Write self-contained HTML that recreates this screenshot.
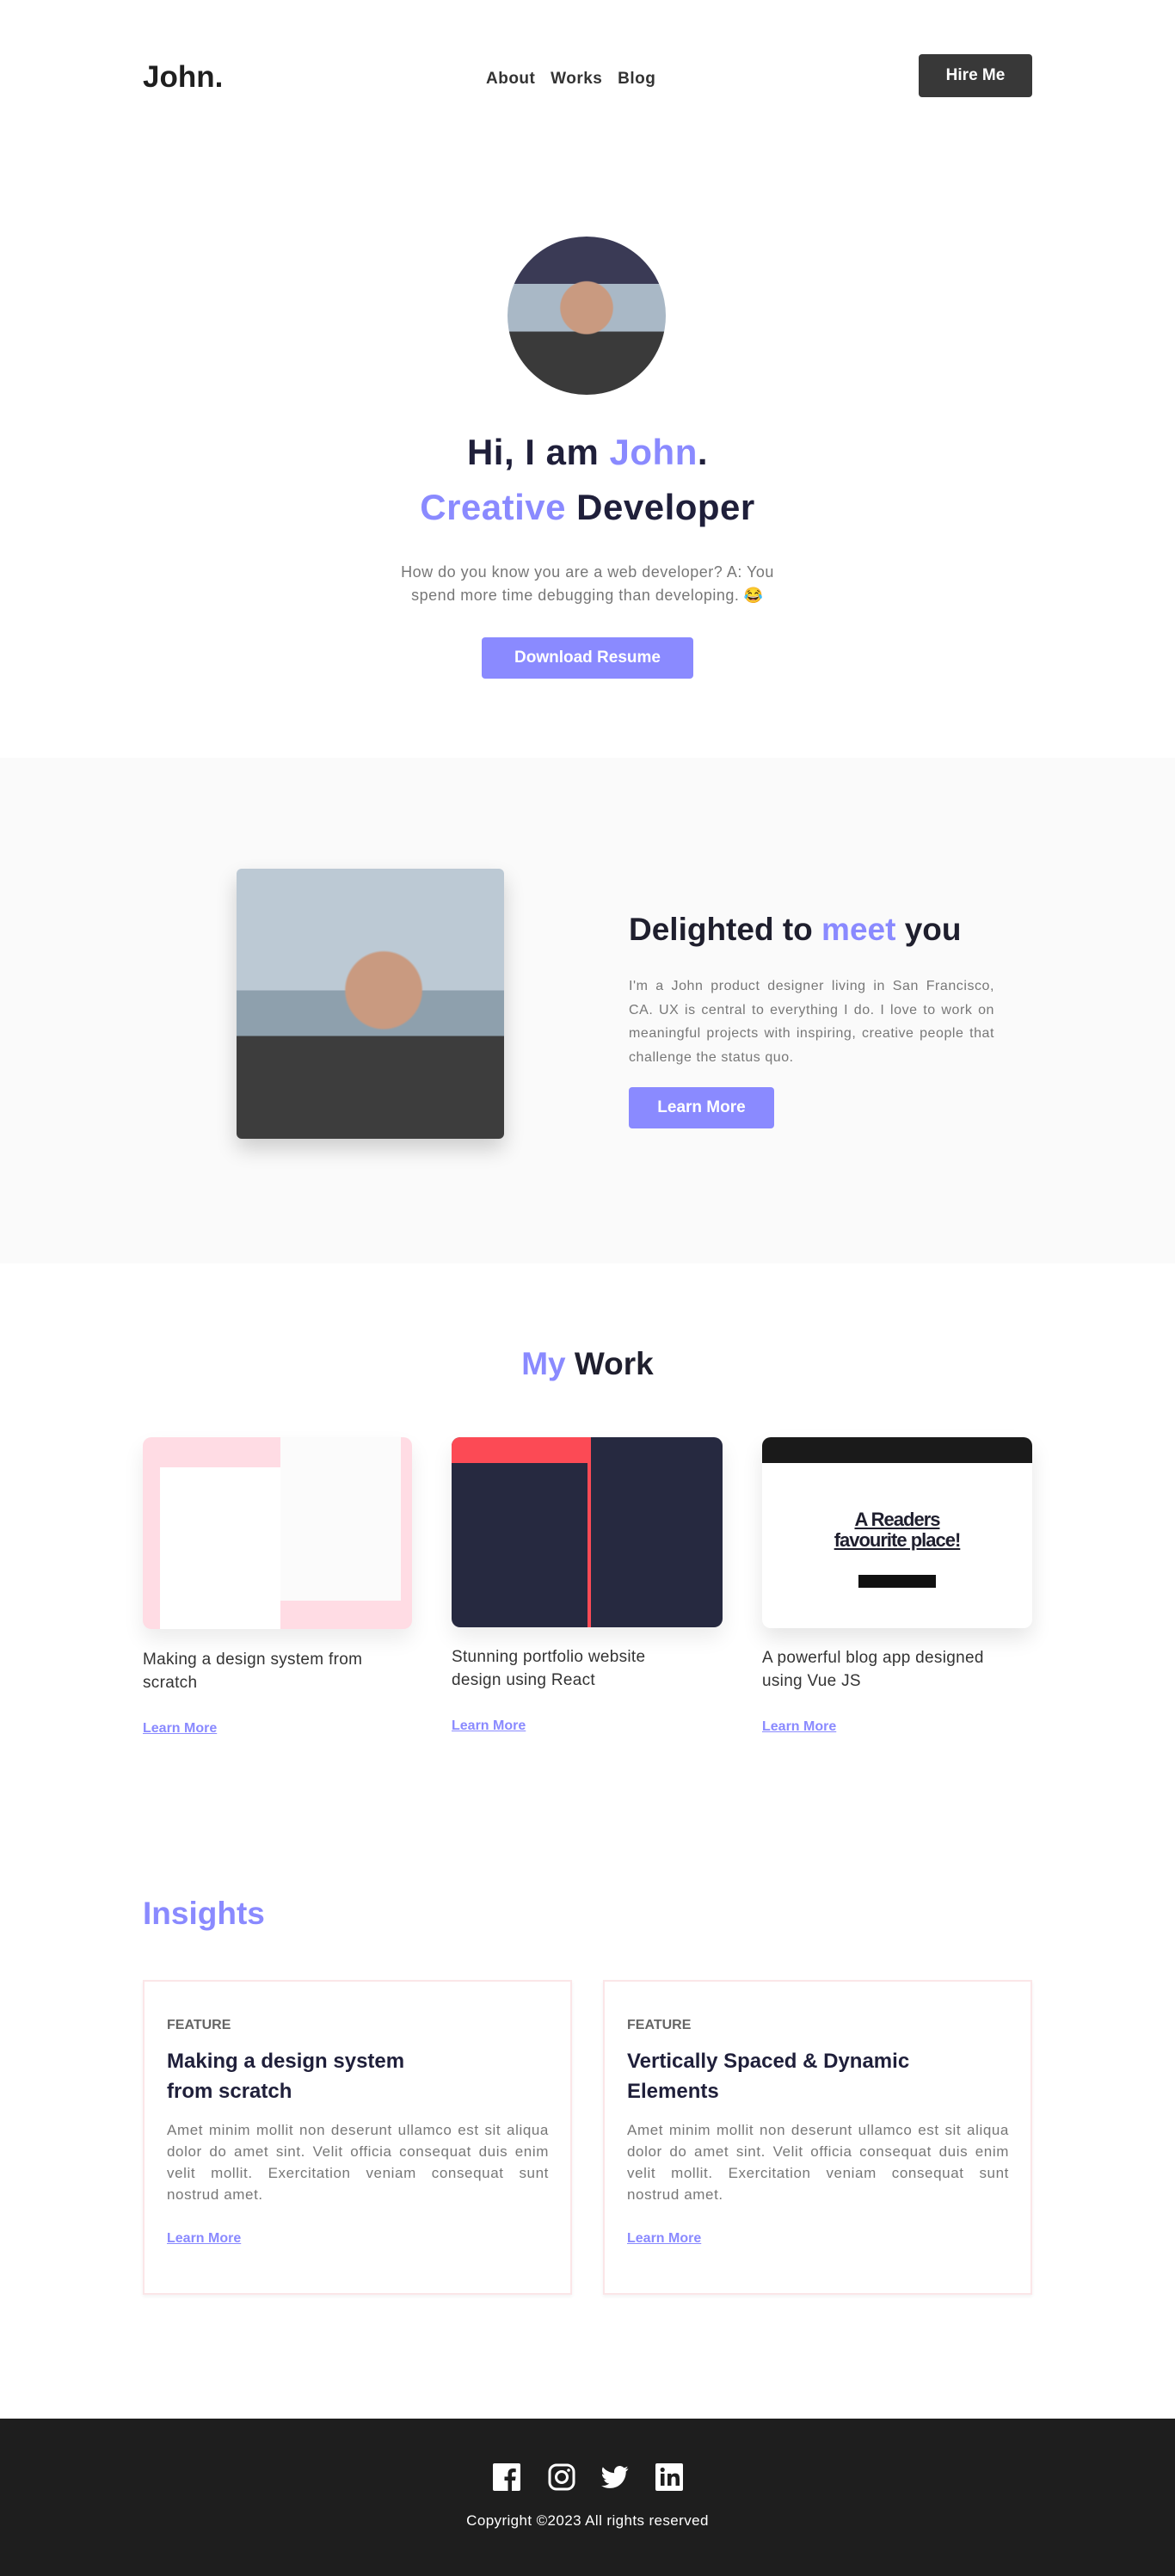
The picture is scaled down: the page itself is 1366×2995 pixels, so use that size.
<!DOCTYPE html>
<html><head><meta charset="utf-8"><style>
*{margin:0;padding:0;box-sizing:border-box}
body{width:1366px;height:2995px;position:relative;background:#fff;font-family:"Liberation Sans",sans-serif;color:#1f1f2e;overflow:hidden}
.a{position:absolute}
.p{color:#8a8aff}
.btn{position:absolute;background:#8a8aff;color:#fff;font-weight:bold;border-radius:4px;display:flex;align-items:center;justify-content:center}
.lm{color:#8a8aff;font-weight:bold;text-decoration:underline;font-size:16px}
.ct{font-size:19px;line-height:27px;color:#333;letter-spacing:.3px}
.card{position:absolute;top:2302px;width:499px;height:366px;border:2px solid #fbe6e8;box-shadow:0 2px 4px rgba(0,0,0,.05);padding:0 26px}
.card .f{position:absolute;top:42px;left:26px;font-size:16px;font-weight:bold;color:#666}
.card h3{position:absolute;top:75px;left:26px;font-size:24px;line-height:35px;color:#1f1f3a}
.card .t{position:absolute;top:160px;left:26px;width:444px;font-size:17px;line-height:25px;color:#777;text-align:justify;letter-spacing:.6px}
.card .lm{position:absolute;top:290px;left:26px}
</style></head><body>
<div class="a" style="left:166px;top:70px;font-size:35px;font-weight:bold;color:#1f1f1f">John.</div>
<div class="a" style="left:565px;top:81px;font-size:19px;font-weight:bold;color:#333;word-spacing:12px;letter-spacing:.5px">About Works Blog</div>
<div class="btn" style="left:1068px;top:63px;width:132px;height:50px;background:#383838;font-size:19px">Hire Me</div>

<div class="a" style="left:590px;top:275px;width:184px;height:184px;border-radius:50%;background:radial-gradient(circle at 50% 45%,#c99a80 0 22%,transparent 23%),linear-gradient(#3a3a55 0 30%,#a9b8c6 30% 60%,#3a3a3a 60%);overflow:hidden"></div>
<div class="a" style="left:0;width:1366px;top:494px;text-align:center;font-size:42px;font-weight:bold;color:#1f1f3a;line-height:64px;letter-spacing:.5px">Hi, I am <span class="p">John</span>.<br><span class="p">Creative</span> Developer</div>
<div class="a" style="left:0;width:1366px;top:652px;text-align:center;font-size:18px;line-height:27px;color:#777;letter-spacing:.5px">How do you know you are a web developer? A: You<br>spend more time debugging than developing. 😂</div>
<div class="btn" style="left:560px;top:741px;width:246px;height:48px;font-size:19px">Download Resume</div>

<div class="a" style="left:0;top:881px;width:1366px;height:588px;background:#fafafa"></div>
<div class="a" style="left:275px;top:1010px;width:311px;height:314px;border-radius:6px;box-shadow:0 12px 24px rgba(0,0,0,.18);background:radial-gradient(ellipse at 55% 45%,#c99a80 0 18%,transparent 19%),linear-gradient(#bcc9d4 0 45%,#8ea0ad 45% 62%,#3d3d3d 62%)"></div>
<div class="a" style="left:731px;top:1060px;font-size:37px;font-weight:bold;color:#1f1f2e">Delighted to <span class="p">meet</span> you</div>
<div class="a" style="left:731px;top:1133px;width:425px;font-size:16px;line-height:27.5px;color:#777;text-align:justify;letter-spacing:.55px">I'm a John product designer living in San Francisco, CA. UX is central to everything I do. I love to work on meaningful projects with inspiring, creative people that challenge the status quo.</div>
<div class="btn" style="left:731px;top:1264px;width:169px;height:48px;font-size:19px">Learn More</div>

<div class="a" style="left:0;width:1366px;top:1565px;text-align:center;font-size:37px;font-weight:bold"><span class="p">My</span> Work</div>

<div class="a" style="left:166px;top:1671px;width:313px;height:223px;border-radius:10px;overflow:hidden;background:#ffdce4;box-shadow:0 12px 24px rgba(0,0,0,.08)"><div class="a" style="left:20px;top:35px;width:140px;height:188px;background:#fff"></div><div class="a" style="left:160px;top:0;width:140px;height:190px;background:#fbfbfb"></div></div>
<div class="a" style="left:525px;top:1671px;width:315px;height:221px;border-radius:10px;overflow:hidden;background:#262940;box-shadow:0 12px 24px rgba(0,0,0,.08)"><div class="a" style="left:0;top:0;width:160px;height:30px;background:#fc4a55"></div><div class="a" style="left:158px;top:0;width:4px;height:221px;background:#fc4a55"></div></div>
<div class="a" style="left:886px;top:1671px;width:314px;height:222px;border-radius:10px;overflow:hidden;background:#fff;box-shadow:0 12px 24px rgba(0,0,0,.1)"><div class="a" style="left:0;top:0;width:314px;height:30px;background:#1a1a1a"></div><div class="a" style="left:0;width:314px;top:84px;text-align:center;font-size:22px;font-weight:bold;line-height:24px;text-decoration:underline;letter-spacing:-1px">A Readers<br>favourite place!</div><div class="a" style="left:112px;top:160px;width:90px;height:15px;background:#111"></div></div>

<div class="a ct" style="left:166px;top:1916px;width:290px">Making a design system from scratch</div>
<div class="a ct" style="left:525px;top:1913px;width:260px">Stunning portfolio website design using React</div>
<div class="a ct" style="left:886px;top:1914px;width:290px">A powerful blog app designed using Vue JS</div>
<div class="a lm" style="left:166px;top:2001px">Learn More</div>
<div class="a lm" style="left:525px;top:1998px">Learn More</div>
<div class="a lm" style="left:886px;top:1999px">Learn More</div>

<div class="a p" style="left:166px;top:2204px;font-size:37px;font-weight:bold">Insights</div>
<div class="card" style="left:166px"><div class="f">FEATURE</div><h3>Making a design system<br>from scratch</h3><div class="t">Amet minim mollit non deserunt ullamco est sit aliqua dolor do amet sint. Velit officia consequat duis enim velit mollit. Exercitation veniam consequat sunt nostrud amet.</div><div class="lm">Learn More</div></div>
<div class="card" style="left:701px"><div class="f">FEATURE</div><h3>Vertically Spaced &amp; Dynamic<br>Elements</h3><div class="t">Amet minim mollit non deserunt ullamco est sit aliqua dolor do amet sint. Velit officia consequat duis enim velit mollit. Exercitation veniam consequat sunt nostrud amet.</div><div class="lm">Learn More</div></div>

<div class="a" style="left:0;top:2812px;width:1366px;height:183px;background:#1e1e1e"></div>
<svg class="a" style="left:573px;top:2864px" width="32" height="32" viewBox="0 0 32 32"><rect width="32" height="32" rx="2" fill="#fff"/><path d="M22 32V20h4l.6-4.5H22v-3c0-1.3.4-2.2 2.3-2.2h2.4V6.3C26.3 6.2 25 6 23.3 6 19.8 6 17.5 8.1 17.5 12v3.5h-4V20h4v12z" fill="#1e1e1e"/></svg>
<svg class="a" style="left:637px;top:2864px" width="32" height="32" viewBox="0 0 32 32"><rect x="2" y="2" width="28" height="28" rx="8" fill="none" stroke="#fff" stroke-width="3"/><circle cx="16" cy="16" r="6.5" fill="none" stroke="#fff" stroke-width="3"/><circle cx="24" cy="8" r="1.8" fill="#fff"/></svg>
<svg class="a" style="left:698px;top:2864px" width="34" height="32" viewBox="0 0 24 24"><path fill="#fff" d="M23.6 4.6c-.9.4-1.8.6-2.8.8 1-.6 1.8-1.6 2.1-2.7-.9.6-2 1-3.1 1.2a4.9 4.9 0 0 0-8.4 4.5C7.4 8.2 3.8 6.3 1.4 3.3a4.9 4.9 0 0 0 1.5 6.6c-.8 0-1.6-.3-2.2-.6 0 2.4 1.7 4.4 3.9 4.8-.7.2-1.5.2-2.2.1.6 2 2.4 3.4 4.6 3.4A9.9 9.9 0 0 1 0 19.5 14 14 0 0 0 7.5 21.7c9.1 0 14-7.5 14-14v-.6c1-.7 1.8-1.6 2.1-2.5z"/></svg>
<svg class="a" style="left:762px;top:2864px" width="32" height="32" viewBox="0 0 32 32"><rect width="32" height="32" rx="2" fill="#fff"/><rect x="6" y="12" width="4.5" height="14" fill="#1e1e1e"/><circle cx="8.2" cy="7.5" r="2.6" fill="#1e1e1e"/><path d="M14 12h4.3v2c.7-1.3 2.3-2.4 4.6-2.4 4.5 0 5.1 3 5.1 6.8V26h-4.5v-6.8c0-1.7 0-3.8-2.3-3.8s-2.7 1.8-2.7 3.7V26H14z" fill="#1e1e1e"/></svg>
<div class="a" style="left:0;width:1366px;top:2921px;text-align:center;font-size:17px;color:#fff;letter-spacing:.4px">Copyright ©2023 All rights reserved</div>
</body></html>
